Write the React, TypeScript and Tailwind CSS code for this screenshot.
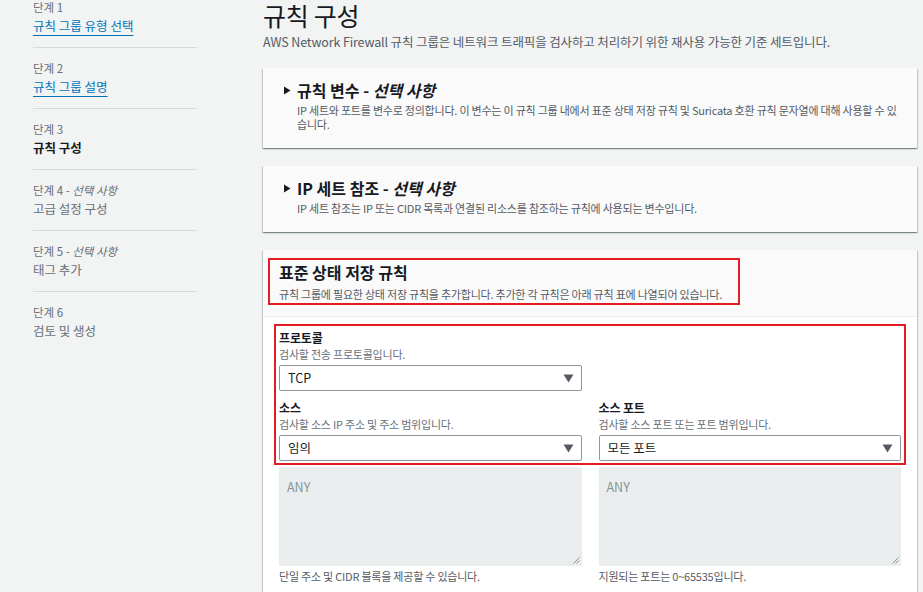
const font = "font-['Noto_Sans_CJK_KR','Noto_Sans',sans-serif]";

interface StepProps {
  label: string;
  optional?: boolean;
  title: string;
  state: "done" | "current" | "todo";
  last?: boolean;
}

function Step({ label, optional, title, state, last }: StepProps) {
  return (
    <div className={`pt-3 pb-[11px] ${last ? "" : "border-b border-[#d5dbdb]"}`}>
      <div className="text-[11.5px] leading-4 text-[#687078]">
        {label}
        {optional && (
          <>
            {" - "}
            <span className="italic">선택 사항</span>
          </>
        )}
      </div>
      <div className="mt-[1px] text-[12.5px] leading-5">
        {state === "done" && (
          <span className="text-[#0073bb] underline underline-offset-[4px] decoration-[#0073bb]">{title}</span>
        )}
        {state === "current" && <span className="font-bold text-[#16191f]">{title}</span>}
        {state === "todo" && <span className="text-[#687078]">{title}</span>}
      </div>
    </div>
  );
}

function Caret() {
  return (
    <svg width="8" height="9" viewBox="0 0 8 9" className="shrink-0">
      <path d="M1 0.5 L7.5 4.5 L1 8.5 Z" fill="#16191f" />
    </svg>
  );
}

function DownArrow() {
  return (
    <svg width="11" height="9" viewBox="0 0 11 9">
      <path d="M0.5 0.5 H10.5 L5.5 8.5 Z" fill="#545b64" />
    </svg>
  );
}

function SelectBox({ value }: { value: string }) {
  return (
    <div className="h-[26px] flex items-center justify-between pl-2 pr-[7px] bg-white border border-[#8d9899] rounded-[2px]">
      <span className="text-[12.5px] text-[#16191f]">{value}</span>
      <DownArrow />
    </div>
  );
}

const cardShadow =
  "shadow-[0_1px_1px_0_rgba(0,28,36,0.3),1px_1px_1px_0_rgba(0,28,36,0.15),-1px_1px_1px_0_rgba(0,28,36,0.15)]";

function ExpandCard({ title, desc }: { title: string; desc: string }) {
  return (
    <div className={`bg-[#fafafa] pt-3 pb-[17px] pl-5 pr-[18px] ${cardShadow}`}>
      <div className="flex items-center gap-[6px] h-5">
        <Caret />
        <h2 className="text-[16px] font-bold text-[#16191f] leading-5">
          {title} - <span className="italic">선택 사항</span>
        </h2>
      </div>
      <p className="mt-[3px] pl-[14px] text-[11px] leading-[14px] text-[#545b64] tracking-[-0.02em]">{desc}</p>
    </div>
  );
}

function Field({ label, desc, value }: { label: string; desc: string; value: string }) {
  return (
    <div>
      <div className="text-[12px] font-bold leading-4 text-[#16191f] tracking-[-0.01em]">{label}</div>
      <div className="mt-[1px] text-[11px] leading-[14px] text-[#687078] tracking-[-0.02em]">{desc}</div>
      <div className="mt-1">
        <SelectBox value={value} />
      </div>
    </div>
  );
}

export default function App() {
  return (
    <div className={`${font} bg-[#f2f3f3] w-full h-[592px] overflow-hidden flex`}>
      {/* Wizard steps */}
      <nav className="pl-[33px] w-[230px] shrink-0">
        <div className="w-[164px] -mt-[13px]">
          <Step label="단계 1" title="규칙 그룹 유형 선택" state="done" />
          <Step label="단계 2" title="규칙 그룹 설명" state="done" />
          <Step label="단계 3" title="규칙 구성" state="current" />
          <Step label="단계 4" optional title="고급 설정 구성" state="todo" />
          <Step label="단계 5" optional title="태그 추가" state="todo" />
          <Step label="단계 6" title="검토 및 생성" state="todo" last />
        </div>
      </nav>

      {/* Main */}
      <main className="pl-[33px] pr-[6px] flex-1 min-w-0">
        <h1 className="pt-[1px] text-[25px] leading-[28px] text-[#16191f] tracking-[-0.01em]">규칙 구성</h1>
        <p className="mt-[5px] text-[12.5px] leading-4 text-[#545b64] tracking-[-0.01em]">
          AWS Network Firewall 규칙 그룹은 네트워크 트래픽을 검사하고 처리하기 위한 재사용 가능한 기준 세트입니다.
        </p>

        <div className="mt-[18px] flex flex-col gap-[18px]">
          <ExpandCard
            title="규칙 변수"
            desc="IP 세트와 포트를 변수로 정의합니다. 이 변수는 이 규칙 그룹 내에서 표준 상태 저장 규칙 및 Suricata 호환 규칙 문자열에 대해 사용할 수 있습니다."
          />
          <ExpandCard
            title="IP 세트 참조"
            desc="IP 세트 참조는 IP 또는 CIDR 목록과 연결된 리소스를 참조하는 규칙에 사용되는 변수입니다."
          />

          {/* Stateful rules */}
          <div className={`bg-white ${cardShadow}`}>
            <div className="bg-[#fafafa] pt-2 pl-[5px] pb-[11px] border-b border-[#eaeded]">
              <div className="w-[472px] h-[47px] border-2 border-[#e31b23] pl-[9px] pt-[2px]">
                <h2 className="text-[16px] font-bold leading-5 text-[#16191f]">표준 상태 저장 규칙</h2>
                <p className="mt-[5px] text-[11px] leading-[14px] text-[#545b64] tracking-[-0.02em]">
                  규칙 그룹에 필요한 상태 저장 규칙을 추가합니다. 추가한 각 규칙은 아래 규칙 표에 나열되어 있습니다.
                </p>
              </div>
            </div>

            <div className="pt-[7px] px-[11px] pb-6">
              <div className="border-2 border-[#e31b23] px-[3px] pt-1 pb-[2px]">
                <div className="grid grid-cols-2 gap-x-[17px] gap-y-[9px]">
                  <Field label="프로토콜" desc="검사할 전송 프로토콜입니다." value="TCP" />
                  <div />
                  <Field label="소스" desc="검사할 소스 IP 주소 및 주소 범위입니다." value="임의" />
                  <Field label="소스 포트" desc="검사할 소스 포트 또는 포트 범위입니다." value="모든 포트" />
                </div>
              </div>

              <div className="mt-[2px] grid grid-cols-2 gap-x-[17px] px-[5px]">
                {["단일 주소 및 CIDR 블록을 제공할 수 있습니다.", "지원되는 포트는 0~65535입니다."].map((hint) => (
                  <div key={hint}>
                    <div className="relative h-[99px] bg-[#eaeded] pt-[6px] pl-2">
                      <span className="text-[12.5px] text-[#879596]">ANY</span>
                      <svg width="7" height="7" viewBox="0 0 7 7" className="absolute right-[2px] bottom-[2px]">
                        <path d="M6.5 0.5 L0.5 6.5 M6.5 3.5 L3.5 6.5" stroke="#879596" strokeWidth="1" />
                      </svg>
                    </div>
                    <div className="mt-[3px] text-[11px] leading-[14px] text-[#545b64] tracking-[-0.02em]">{hint}</div>
                  </div>
                ))}
              </div>
            </div>
          </div>
        </div>
      </main>
    </div>
  );
}
